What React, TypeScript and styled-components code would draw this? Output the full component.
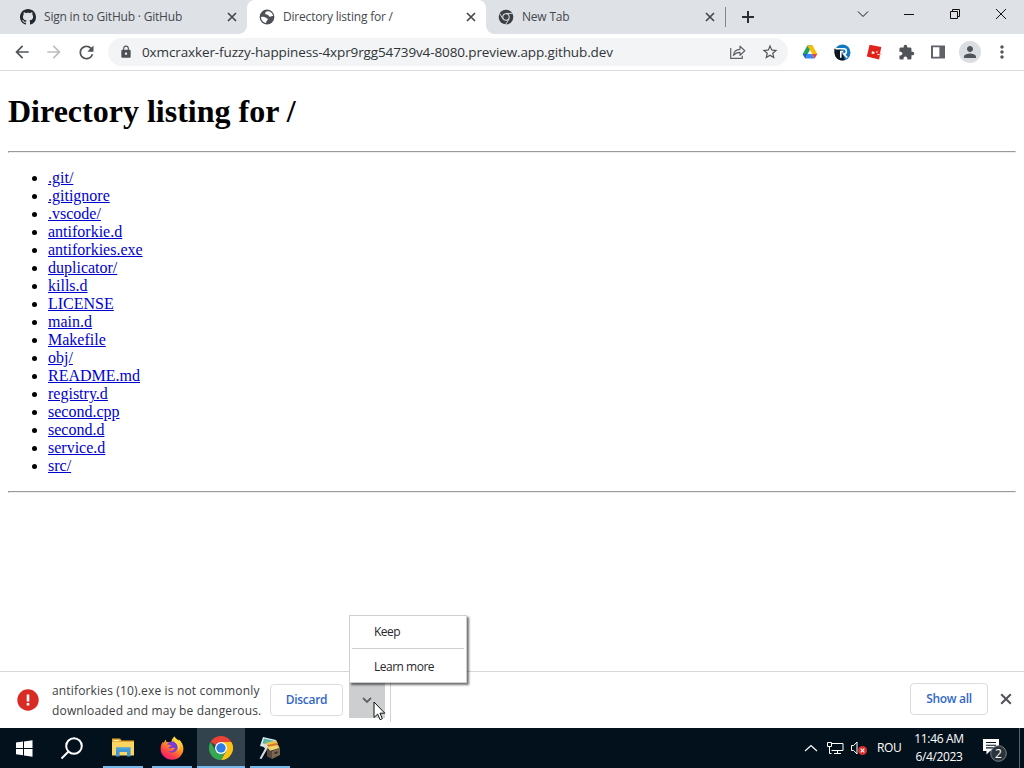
import React from "react";
import styled, { createGlobalStyle, css } from "styled-components";
import {
  MdArrowBack,
  MdArrowForward,
  MdRefresh,
  MdLock,
  MdStarBorder,
  MdExtension,
  MdMoreVert,
  MdPerson,
} from "react-icons/md";

const files = [
  ".git/",
  ".gitignore",
  ".vscode/",
  "antiforkie.d",
  "antiforkies.exe",
  "duplicator/",
  "kills.d",
  "LICENSE",
  "main.d",
  "Makefile",
  "obj/",
  "README.md",
  "registry.d",
  "second.cpp",
  "second.d",
  "service.d",
  "src/",
];

const GithubMark = () => (
  <svg width="16" height="16" viewBox="0 0 16 16" fill="#24292f">
    <path d="M8 0C3.58 0 0 3.58 0 8c0 3.54 2.29 6.53 5.47 7.59.4.07.55-.17.55-.38 0-.19-.01-.82-.01-1.49-2.01.37-2.53-.49-2.69-.94-.09-.23-.48-.94-.82-1.13-.28-.15-.68-.52-.01-.53.63-.01 1.08.58 1.23.82.72 1.21 1.87.87 2.33.66.07-.52.28-.87.51-1.07-1.78-.2-3.64-.89-3.64-3.95 0-.87.31-1.59.82-2.15-.08-.2-.36-1.02.08-2.12 0 0 .67-.21 2.2.82.64-.18 1.32-.27 2-.27.68 0 1.36.09 2 .27 1.53-1.04 2.2-.82 2.2-.82.44 1.1.16 1.92.08 2.12.51.56.82 1.27.82 2.15 0 3.07-1.87 3.75-3.65 3.95.29.25.54.73.54 1.48 0 1.07-.01 1.93-.01 2.2 0 .21.15.46.55.38A8.013 8.013 0 0016 8c0-4.42-3.58-8-8-8z" />
  </svg>
);

const GlobeIcon = () => (
  <svg width="16" height="16" viewBox="0 0 16 16">
    <circle cx="8" cy="8" r="7.4" fill="#4d5156" />
    <path
      d="M9.4 2.2C7.4 2 6.3 3 6.2 4.3c-.1 1.2 1 1.3 2.3 1.5 1.3.2 1 1.7 2.2 1.9 1.3.2 2.2-.7 3.5-.6-.3-2.4-2.2-4.5-4.8-4.9z"
      fill="#fff"
    />
    <path
      d="M2 8.2c1.3-.6 3.4-.5 4.5.3 1 .7 2.3.7 2.3 1.9 0 1-1.2 1.1-1.5 2-.2.6-.1 1.3-.3 1.6C4.2 13.6 2 11 2 8.2z"
      fill="#fff"
    />
  </svg>
);

const ChromeMono = () => (
  <svg width="16" height="16" viewBox="0 0 24 24">
    <circle cx="12" cy="12" r="11" fill="#3c4043" />
    <circle cx="12" cy="12" r="5.6" fill="#dee1e6" />
    <circle cx="12" cy="12" r="4" fill="#3c4043" />
    <path
      d="M12 6.6h10M7.3 14.7L2.4 6.6M16.7 14.7L11.6 23"
      stroke="#dee1e6"
      strokeWidth="1.4"
    />
  </svg>
);

const CrossIcon = ({ size }: { size: number }) => (
  <svg width={size} height={size} viewBox="0 0 10 10">
    <path d="M1 1l8 8M9 1L1 9" stroke="currentColor" strokeWidth="1.7" />
  </svg>
);

const PlusIcon = () => (
  <svg width="14" height="14" viewBox="0 0 14 14">
    <path d="M7 1v12M1 7h12" stroke="currentColor" strokeWidth="2" />
  </svg>
);

const ChromeColor = () => (
  <svg width="24" height="24" viewBox="0 0 48 48">
    <path d="M24 24L3.2 12A24 24 0 0 1 44.8 12H24z" fill="#ea4335" />
    <path d="M24 12h20.8A24 24 0 0 1 24 48l10.4-18z" fill="#fbc116" />
    <path d="M3.2 12l10.4 18L24 36l10.4-6L24 48A24 24 0 0 1 3.2 12z" fill="#34a853" />
    <circle cx="24" cy="24" r="12" fill="#fff" />
    <circle cx="24" cy="24" r="9.4" fill="#2f7de9" />
  </svg>
);

const DriveIcon = () => (
  <svg width="16" height="16" viewBox="0 0 16 16">
    <path d="M5.4 1.6h5.2L8 6z" fill="#188038" />
    <path d="M5.4 1.6L8 6 3.3 14.4.7 10z" fill="#1ea362" />
    <path d="M5.4 1.6h5.2l4.7 8.4h-5.1z" fill="#fbbc04" />
    <path d="M.7 10h4.8L3.3 14.4z" fill="#1967d2" />
    <path d="M5.7 10h4.6l2.4 4.4H3.3z" fill="#4285f4" />
    <path d="M10.2 10h5.1l-2.6 4.4z" fill="#ea4335" />
    <path d="M8 6.2L10.1 10H5.8z" fill="#fff" />
  </svg>
);

const RoproIcon = () => (
  <svg width="17" height="17" viewBox="0 0 17 17">
    <circle cx="8.5" cy="8.5" r="8" fill="#1179bf" />
    <path d="M.2 4.8h6.5L11 16a8 8 0 0 1-6.5-.6C2 14 .6 11.5.5 8.500z" fill="#10161e" />
    <path
      d="M1.5 4.8h8.3a2.6 2.6 0 0 1 0 5.2l3.4 3.6M6.8 13.8V7.6h2.4"
      fill="none"
      stroke="#fff"
      strokeWidth="1.6"
    />
  </svg>
);

const RobloxIcon = () => (
  <svg width="17" height="17" viewBox="0 0 17 17">
    <path d="M3.6.7L15.3 2.9 14 9.4l2 .5-2 .7-.9 5L.8 12.4z" fill="#e2231a" />
    <path d="M6 7.3l2.6.6-.5 2.2-2.6-.6z" fill="#fff" />
    <path d="M10.4 7.2l1.3.3-.3 1.3-1.3-.3zM11 10.3l5-.9-4 1.8z" fill="#fff" />
  </svg>
);

const ShareIcon = () => (
  <svg width="18" height="18" viewBox="0 0 18 18" fill="none" stroke="#5f6368" strokeWidth="1.2">
    <path d="M1.7 5v10.3h11.6v-2.6" />
    <path
      d="M4.4 12.3c.4-4 2.7-5.9 6.6-6V3.2l4.8 4.6-4.8 4.5V9.4c-2.7 0-4.8.8-6.6 2.9z"
      strokeLinejoin="round"
    />
  </svg>
);

const SidePanelIcon = () => (
  <svg width="16" height="16" viewBox="0 0 16 16">
    <path d="M1 1.5h14v13H1zM3 3.3v9.4h6.4V3.3z" fill="#5f6368" fillRule="evenodd" />
  </svg>
);

const ExplorerIcon = () => (
  <svg width="24" height="22" viewBox="0 0 24 22">
    <path d="M1 2.5h8l1.6 2H23V19H1z" fill="#e5a92b" />
    <path d="M1 6h22v13.5H1z" fill="#fcd462" />
    <path d="M2.8 4h5.4v1.2H2.8z" fill="#fff3c4" />
    <path d="M5 11.5h14.5v9H16V16H8.6v4.5H5z" fill="#3f97d3" />
    <path d="M5 11.5h14.5v2H5z" fill="#4ea5dc" />
  </svg>
);

const FirefoxIcon = () => (
  <svg width="24" height="24" viewBox="0 0 24 24">
    <defs>
      <linearGradient id="fx" x1="0.8" y1="0" x2="0.2" y2="1">
        <stop offset="0" stopColor="#fff04a" />
        <stop offset="0.4" stopColor="#ff9a1f" />
        <stop offset="0.75" stopColor="#ff3b4d" />
        <stop offset="1" stopColor="#e31587" />
      </linearGradient>
    </defs>
    <path
      d="M14.4.4c1 1.9 2.7 2.8 4.1 4.3l.2-1.5c3 2.5 4.6 5.7 4.7 9.4A11.4 11.2 0 0 1 .6 12.7c0-3.2 1.2-5.3 2.4-7l.5 1.3L5.7 3.6l.9 2.6c1.6-.5 3.4-.3 4.6.3.3-2.7 1.4-4.7 3.2-6.1z"
      fill="url(#fx)"
    />
    <path
      d="M7 8.5c1.6.7 3 .6 4.4.9-.6 1.3-2.5 1.2-2.9 2.6 1.2.8 2.6.2 4-.2 1.4-.3 2.4.4 2.4.4-1.8 3.3-4.7 3.4-6.9 2.8 3 3 8.3 1.8 9.5-2.4.6-2.8-1-5.6-3.2-6.5C11.5 4.9 8.2 6 7 8.5z"
      fill="#7b3bd6"
    />
    <path
      d="M14.4.4c-2.3 3 .4 5.5 2.3 7.6 1.6 2 1.9 4.9.4 7.3 3-1.9 3.6-5.7 1.4-10.6C17.1 3.2 15.4 2.3 14.4.4z"
      fill="#ffd83a"
    />
  </svg>
);

const ToolsIcon = () => (
  <svg width="24" height="24" viewBox="0 0 24 24">
    <path d="M5 1l13 3-3 9L2 10z" fill="#d7ecf2" />
    <path d="M6 2.4L16.5 5 15 9 4.5 7.5z" fill="#58b5a2" />
    <path d="M7.5 7l11-2.5L20 8 10 11z" fill="#f2c14a" />
    <path d="M9 9l10-2 1.5 3L11 12z" fill="#d8762c" />
    <path d="M9 11l11-2 1.5 3L12 15z" fill="#f3d469" />
    <path d="M9 13l5 2.5V23l-5-2.5z" fill="#5a4a3e" />
    <path d="M14 15l8-3.5V19l-8 4z" fill="#7d674f" />
    <path d="M16.5 16.5l3-1.2v1.8l-3 1.2z" fill="#2f2823" />
    <path d="M1.5 22.5L7 12.5l-2-2L6 8l2 .5.3 2 1.5 1.5L3.5 23z" fill="#d5dade" />
  </svg>
);

const WindowsLogo = () => (
  <svg width="17" height="17" viewBox="0 0 17 17" fill="#fff">
    <path d="M0 2.6l7-1V8H0zM8 1.4L16.5.2V8H8zM0 9h7v6.3l-7-1zM8 9h8.5v7.7L8 15.5z" />
  </svg>
);

const NotificationIcon = () => (
  <svg width="26" height="24" viewBox="0 0 26 24">
    <path d="M1 1h16v12H8l-3.5 3.5V13H1z" fill="#fff" />
    <path d="M4 4.5h10M4 7.2h10M4 9.9h10" stroke="#0b1723" strokeWidth="1.1" />
    <circle cx="16.5" cy="15.5" r="7.8" fill="#2b333b" stroke="#7b8289" />
  </svg>
);

const App = () => {
  return (
    <>
      <GlobalStyle />
      <Screen>
        <TabStrip>
          <Tab>
            <GithubMark />
            <TabTitle>Sign in to GitHub · GitHub</TabTitle>
            <CrossIcon size={10} />
          </Tab>
          <Tab $active>
            <GlobeIcon />
            <TabTitle>Directory listing for /</TabTitle>
            <CrossIcon size={10} />
          </Tab>
          <Tab>
            <ChromeMono />
            <TabTitle>New Tab</TabTitle>
            <CrossIcon size={10} />
          </Tab>
          <TabDivider />
          <NewTab>
            <PlusIcon />
          </NewTab>
          <WindowControls>
            <svg viewBox="0 0 12 12">
              <path d="M1 3.5l5 5 5-5" />
            </svg>
            <svg viewBox="0 0 12 12">
              <path d="M1 6.5h10" />
            </svg>
            <svg viewBox="0 0 12 12">
              <path d="M1.5 3.5h7v7h-7zM3.5 3.5v-2h7v7h-2" />
            </svg>
            <svg viewBox="0 0 12 12">
              <path d="M1 1l10 10M11 1L1 11" />
            </svg>
          </WindowControls>
        </TabStrip>

        <Toolbar>
          <ToolButton>
            <MdArrowBack size={20} />
          </ToolButton>
          <ToolButton $disabled>
            <MdArrowForward size={20} />
          </ToolButton>
          <ToolButton>
            <MdRefresh size={21} />
          </ToolButton>
          <AddressBar>
            <LockSlot>
              <MdLock size={14} />
            </LockSlot>
            <Url>0xmcraxker-fuzzy-happiness-4xpr9rgg54739v4-8080.preview.app.github.dev</Url>
            <ToolButton>
              <ShareIcon />
            </ToolButton>
            <ToolButton>
              <MdStarBorder size={18} />
            </ToolButton>
          </AddressBar>
          <ToolButton>
            <DriveIcon />
          </ToolButton>
          <ToolButton>
            <RoproIcon />
          </ToolButton>
          <ToolButton>
            <RobloxIcon />
          </ToolButton>
          <ToolButton>
            <MdExtension size={17} />
          </ToolButton>
          <ToolButton>
            <SidePanelIcon />
          </ToolButton>
          <ToolButton>
            <Avatar>
              <MdPerson size={18} />
            </Avatar>
          </ToolButton>
          <ToolButton>
            <MdMoreVert size={20} />
          </ToolButton>
        </Toolbar>

        <Page>
          <Title>Directory listing for /</Title>
          <Rule />
          <FileList>
            {files.map((file) => (
              <li key={file}>
                <a href={`#${file}`}>{file}</a>
              </li>
            ))}
          </FileList>
          <Rule />
        </Page>

        <DownloadBar>
          <Danger>
            <svg width="22" height="22" viewBox="0 0 22 22">
              <circle cx="11" cy="11" r="10.7" fill="#d92b24" />
              <path d="M9.7 5.5h2.6v7H9.7zM9.7 14h2.6v2.5H9.7z" fill="#fff" />
            </svg>
          </Danger>
          <Warning>
            <div>antiforkies (10).exe is not commonly</div>
            <div>downloaded and may be dangerous.</div>
          </Warning>
          <BarButton $width={73}>Discard</BarButton>
          <MoreButton>
            <svg width="10" height="7" viewBox="0 0 10 7">
              <path d="M1 1l4 4 4-4" fill="none" stroke="#5f6368" strokeWidth="1.8" />
            </svg>
            <Menu>
              <MenuItem>Keep</MenuItem>
              <MenuItem>Learn more</MenuItem>
            </Menu>
            <Cursor width="13" height="20" viewBox="0 0 13 20">
              <path
                d="M1 1v15.5l3.6-3.4 2.5 5.6 2.3-1-2.4-5.5h4.8z"
                fill="#fff"
                stroke="#111"
              />
            </Cursor>
          </MoreButton>
          <BarDivider />
          <ShowAll $width={78}>Show all</ShowAll>
          <CloseBar>
            <CrossIcon size={12} />
          </CloseBar>
        </DownloadBar>

        <Taskbar>
          <TaskButton>
            <WindowsLogo />
          </TaskButton>
          <TaskButton>
            <svg width="26" height="24" viewBox="0 0 26 24" fill="none" stroke="#fff" strokeWidth="2">
              <circle cx="14" cy="10" r="7.8" />
              <path d="M8.5 15.5l-7 7" />
            </svg>
          </TaskButton>
          <TaskSpacer />
          <TaskButton $running>
            <ExplorerIcon />
          </TaskButton>
          <TaskButton $running>
            <FirefoxIcon />
          </TaskButton>
          <TaskButton $running $focused>
            <ChromeColor />
          </TaskButton>
          <TaskButton $running>
            <ToolsIcon />
          </TaskButton>
          <Tray>
            <svg width="14" height="8" viewBox="0 0 14 8">
              <path d="M1 7l6-5.5L13 7" fill="none" stroke="#fff" strokeWidth="1.2" />
            </svg>
            <NetworkSlot>
              <svg width="17" height="15" viewBox="0 0 17 15" fill="none" stroke="#fff">
                <path d="M4.5 2.5H16v7H4.5M10.5 9.5v3M7 12.5h7M.5 1.5h4v4h-4zM2.5 5.5v7h2" />
              </svg>
            </NetworkSlot>
            <svg width="18" height="16" viewBox="0 0 18 16">
              <path d="M1.5 5.5h2.2L7 2v12l-3.3-3.5H1.5z" fill="none" stroke="#fff" />
              <circle cx="12.5" cy="10.5" r="4.5" fill="#d9302c" />
              <path d="M10.7 8.7l3.6 3.6M14.3 8.7l-3.6 3.6" stroke="#fff" strokeWidth="1.1" />
            </svg>
            <Language>ROU</Language>
            <Clock>
              <span>11:46 AM</span>
              <span>6/4/2023</span>
            </Clock>
            <Notifications>
              <NotificationIcon />
              <Badge>2</Badge>
            </Notifications>
            <PeekEdge />
          </Tray>
        </Taskbar>
      </Screen>
    </>
  );
};

const GlobalStyle = createGlobalStyle`
  * {
    box-sizing: border-box;
  }
  body {
    margin: 0;
    overflow: hidden;
  }
  svg {
    display: block;
    flex: none;
  }
`;

const flexCenter = css`
  display: flex;
  align-items: center;
  justify-content: center;
`;

const Screen = styled.div`
  display: flex;
  flex-direction: column;
  width: 1024px;
  height: 768px;
  background-color: white;
  font-family: "Open Sans", "Noto Sans", sans-serif;
  font-size: 12px;
  color: #3c4043;
`;

const TabStrip = styled.header`
  display: flex;
  align-items: center;
  height: 34px;
  padding-left: 8px;
  background-color: #dee1e6;
`;

const Tab = styled.div<{ $active?: boolean }>`
  position: relative;
  display: flex;
  align-items: center;
  gap: 8px;
  width: 239px;
  height: 34px;
  padding: 0 10px 0 12px;
  color: #45494d;
  ${({ $active }) =>
    $active &&
    css`
      background-color: white;
      border-radius: 8px 8px 0 0;
      &::before,
      &::after {
        content: "";
        position: absolute;
        bottom: 0;
        width: 8px;
        height: 8px;
      }
      &::before {
        left: -8px;
        background: radial-gradient(circle at 0 0, transparent 7.5px, white 8px);
      }
      &::after {
        right: -8px;
        background: radial-gradient(circle at 100% 0, transparent 7.5px, white 8px);
      }
    `}
`;

const TabTitle = styled.span`
  flex: 1;
  padding-bottom: 1px;
  letter-spacing: -0.2px;
  white-space: nowrap;
`;

const TabDivider = styled.div`
  width: 1px;
  height: 20px;
  background-color: #80868b;
`;

const NewTab = styled.div`
  ${flexCenter}
  width: 28px;
  height: 28px;
  margin-left: 8px;
  color: #2b2f33;
`;

const WindowControls = styled.div`
  display: flex;
  gap: 34px;
  margin: 0 17px 6px auto;
  svg {
    width: 12px;
    height: 12px;
    fill: none;
    stroke: #111;
  }
`;

const Toolbar = styled.div`
  display: flex;
  align-items: center;
  height: 37px;
  padding: 0 6px;
  border-bottom: 1px solid #d9dbde;
`;

const ToolButton = styled.div<{ $disabled?: boolean }>`
  ${flexCenter}
  width: 32px;
  height: 28px;
  color: ${({ $disabled }) => ($disabled ? "#bcbec1" : "#505459")};
`;

const AddressBar = styled.div`
  display: flex;
  align-items: center;
  width: 680px;
  height: 28px;
  margin: 0 6px;
  padding: 0 2px 0 10px;
  border-radius: 14px;
  background-color: #f3f4f5;
`;

const LockSlot = styled.div`
  ${flexCenter}
  width: 16px;
  margin-right: 8px;
  color: #4d5156;
`;

const Url = styled.div`
  flex: 1;
  font-size: 13.5px;
  letter-spacing: -0.12px;
  color: #303438;
`;

const Avatar = styled.div`
  ${flexCenter}
  width: 22px;
  height: 22px;
  border-radius: 50%;
  background-color: #dadde2;
`;

const Page = styled.main`
  flex: 1;
  padding: 0 8px;
  overflow: hidden;
  font-family: "Liberation Serif", serif;
  font-size: 16px;
  line-height: 18px;
  color: black;
`;

const Title = styled.h1`
  margin: 22px 0 21px;
  font-size: 32px;
  line-height: 37px;
`;

const Rule = styled.hr`
  margin: 8px 0;
`;

const FileList = styled.ul`
  margin: 16px 0;
  padding-left: 40px;
  a {
    color: #0000d0;
  }
`;

const DownloadBar = styled.div`
  display: flex;
  align-items: center;
  height: 57px;
  padding: 0 12px 0 17px;
  border-top: 1px solid #d5d7da;
`;

const Danger = styled.div`
  width: 35px;
`;

const Warning = styled.div`
  width: 218px;
  padding-top: 2px;
  line-height: 20px;
  letter-spacing: 0.16px;
  white-space: nowrap;
`;

const BarButton = styled.div<{ $width: number }>`
  ${flexCenter}
  width: ${({ $width }) => $width}px;
  height: 32px;
  padding-bottom: 1px;
  border: 1px solid #dadce0;
  border-radius: 4px;
  color: #3267c8;
  font-weight: 600;
  letter-spacing: -0.3px;
`;

const ShowAll = styled(BarButton)`
  margin: 0 12px 2px auto;
`;

const MoreButton = styled.div`
  ${flexCenter}
  position: relative;
  width: 36px;
  height: 36px;
  margin-left: 6px;
  background-color: #cdcecf;
`;

const Menu = styled.div`
  position: absolute;
  left: 0;
  bottom: 35px;
  width: 118px;
  border: 1px solid #cfcfcf;
  background-color: white;
  box-shadow: 2px 2px 2px rgba(0, 0, 0, 0.55);
`;

const MenuItem = styled.div`
  height: 32px;
  margin: 0 2px;
  padding-left: 22px;
  line-height: 32px;
  letter-spacing: -0.5px;
  color: #26282a;
  & + & {
    height: 34px;
    border-top: 1px solid #cfcfcf;
    line-height: 36px;
  }
`;

const Cursor = styled.svg`
  position: absolute;
  left: 24px;
  top: 19px;
`;

const BarDivider = styled.div`
  width: 1px;
  height: 40px;
  margin: 4px 0 0 5px;
  background-color: #d0d2d5;
`;

const CloseBar = styled.div`
  margin-bottom: 2px;
  color: #505459;
`;

const Taskbar = styled.footer`
  display: flex;
  align-items: center;
  gap: 1px;
  height: 40px;
  background-color: #03111d;
  color: white;
`;

const TaskButton = styled.div<{ $running?: boolean; $focused?: boolean }>`
  ${flexCenter}
  width: 48px;
  height: 40px;
  background: ${({ $focused }) => ($focused ? "#33434d" : "transparent")};
  ${({ $running, $focused }) =>
    $running &&
    css`
      flex-direction: column;
      justify-content: space-between;
      padding-top: 8px;
      &::after {
        content: "";
        width: ${$focused ? 48 : 40}px;
        height: 2px;
        background-color: #76b9ed;
      }
    `}
`;

const TaskSpacer = styled.div`
  width: 0;
`;

const Tray = styled.div`
  display: flex;
  align-items: center;
  height: 40px;
  margin-left: auto;
`;

const NetworkSlot = styled.div`
  margin: 0 6px 0 9px;
`;

const Language = styled.div`
  width: 26px;
  margin-left: 9px;
  padding-bottom: 1px;
  letter-spacing: -0.4px;
`;

const Clock = styled.div`
  display: flex;
  flex-direction: column;
  align-items: center;
  width: 60px;
  margin-left: 6px;
  line-height: 18px;
  letter-spacing: -0.35px;
  white-space: nowrap;
  span:first-child {
    margin-top: -1px;
  }
`;

const Notifications = styled.div`
  position: relative;
  margin: 4px 0 0 13px;
`;

const Badge = styled.span`
  position: absolute;
  left: 13px;
  top: 7px;
  line-height: 17px;
`;

const PeekEdge = styled.div`
  width: 5px;
  height: 40px;
  margin-left: 11px;
  border-left: 1px solid #5a646d;
`;

export default App;
